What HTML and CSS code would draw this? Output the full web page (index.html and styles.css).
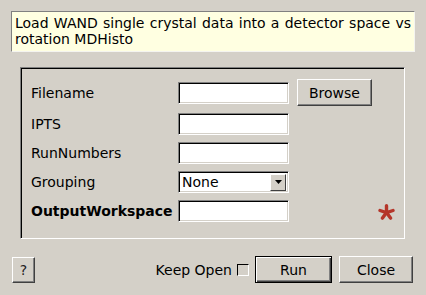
FILE: index.html
```html
<!DOCTYPE html>
<html>
<head>
<meta charset="utf-8">
<link rel="stylesheet" href="styles.css">
</head>
<body>
<div class="dialog">
  <div class="desc">Load WAND single crystal data into a detector space vs rotation MDHisto</div>
  <div class="group">
    <div class="grid">
      <div class="label">Filename</div>
      <div class="input"></div>
      <div class="btn browse">Browse</div>
      <div></div>

      <div class="label">IPTS</div>
      <div class="input"></div>
      <div></div>
      <div></div>

      <div class="label">RunNumbers</div>
      <div class="input"></div>
      <div></div>
      <div></div>

      <div class="label">Grouping</div>
      <div class="select"><span class="sel-text">None</span><span class="sel-arrow"><svg width="7" height="4" viewBox="0 0 7 4"><polygon points="0,0 7,0 3.5,4" fill="#000"/></svg></span></div>
      <div></div>
      <div></div>

      <div class="label bold">OutputWorkspace</div>
      <div class="input"></div>
      <div></div>
      <div class="star"><svg width="17" height="16" viewBox="0 0 17 16"><g stroke="#b5362a" stroke-width="3.4" stroke-linecap="round"><line x1="8.5" y1="8.6" x2="8.5" y2="1.8"/><line x1="8.5" y1="8.6" x2="15" y2="6.5"/><line x1="8.5" y1="8.6" x2="12.5" y2="14.1"/><line x1="8.5" y1="8.6" x2="4.5" y2="14.1"/><line x1="8.5" y1="8.6" x2="2" y2="6.5"/></g></svg></div>
    </div>
  </div>
  <div class="bottom">
    <div class="btn help">?</div>
    <div class="spacer"></div>
    <span class="keep">Keep Open</span>
    <span class="check"></span>
    <div class="btn run">Run</div>
    <div class="btn close">Close</div>
  </div>
</div>
</body>
</html>
```
FILE: styles.css
```css
html, body {
  margin: 0;
  padding: 0;
}
body {
  background: #d4d0c8;
  font-family: "DejaVu Sans", sans-serif;
  font-size: 14px;
  color: #000;
}
.dialog {
  width: 426px;
  height: 295px;
  overflow: hidden;
}
.desc {
  margin: 11px 11px 0 11px;
  height: 41px;
  box-sizing: border-box;
  background: #ffffe1;
  border: 1px solid;
  border-color: #808080 #f4f4f0 #f4f4f0 #808080;
  padding: 3px 3px 0 3px;
  line-height: 16px;
  text-align: justify;
}
.group {
  margin: 15px 21px 0 20px;
  height: 172px;
  box-sizing: border-box;
  border: 1px solid;
  border-color: #808080 #fff #fff #808080;
  box-shadow: inset 1px 1px 0 #000;
  padding: 11px 0 0 10px;
}
.grid {
  display: grid;
  grid-template-columns: 147px 111px 75px 1fr;
  grid-template-rows: 27px 22px 22px 22px 22px;
  column-gap: 0;
  row-gap: 7px;
  align-items: center;
}
.grid > .browse {
  margin-left: 8px;
}
.label {
  line-height: 16px;
}
.bold {
  font-weight: bold;
}
.input {
  height: 22px;
  box-sizing: border-box;
  background: #fff;
  border: 1px solid;
  border-color: #808080 #fff #fff #808080;
  box-shadow: inset 1px 1px 0 #000, inset -1px -1px 0 #d4d0c8;
}
.select {
  height: 22px;
  box-sizing: border-box;
  background: #fff;
  border: 1px solid;
  border-color: #808080 #fff #fff #808080;
  box-shadow: inset 1px 1px 0 #000, inset -1px -1px 0 #d4d0c8;
  display: flex;
  align-items: center;
  padding: 2px 2px 2px 3px;
}
.sel-text {
  flex: 1;
  line-height: 16px;
}
.sel-arrow {
  width: 16px;
  height: 17px;
  box-sizing: border-box;
  background: #d4d0c8;
  border: 1px solid;
  border-color: #fff #404040 #404040 #fff;
  display: flex;
  align-items: center;
  justify-content: center;
}
.btn {
  box-sizing: border-box;
  background: #d4d0c8;
  border: 1px solid;
  border-color: #fff #404040 #404040 #fff;
  box-shadow: inset -1px -1px 0 #808080;
  display: flex;
  align-items: center;
  justify-content: center;
  line-height: 16px;
}
.browse {
  width: 75px;
  height: 27px;
}
.star {
  justify-self: end;
  margin-right: 9px;
  margin-top: 2px;
  display: flex;
}
.bottom {
  margin-top: 17px;
  padding: 0 13px 0 12px;
  display: flex;
  align-items: center;
}
.help {
  width: 23px;
  height: 26px;
  color: #222;
}
.spacer {
  flex: 1;
}
.keep {
  line-height: 16px;
}
.check {
  width: 12px;
  height: 12px;
  box-sizing: border-box;
  margin-left: 5px;
  border: 1px solid;
  border-color: #000 #fff #fff #000;
  background: #d4d0c8;
}
.run {
  width: 77px;
  height: 27px;
  margin-left: 6px;
  border: 1px solid #000;
  box-shadow: inset 1px 1px 0 #fff, inset -1px -1px 0 #404040, inset -2px -2px 0 #808080;
}
.close {
  width: 74px;
  height: 27px;
  margin-left: 7px;
}
```
